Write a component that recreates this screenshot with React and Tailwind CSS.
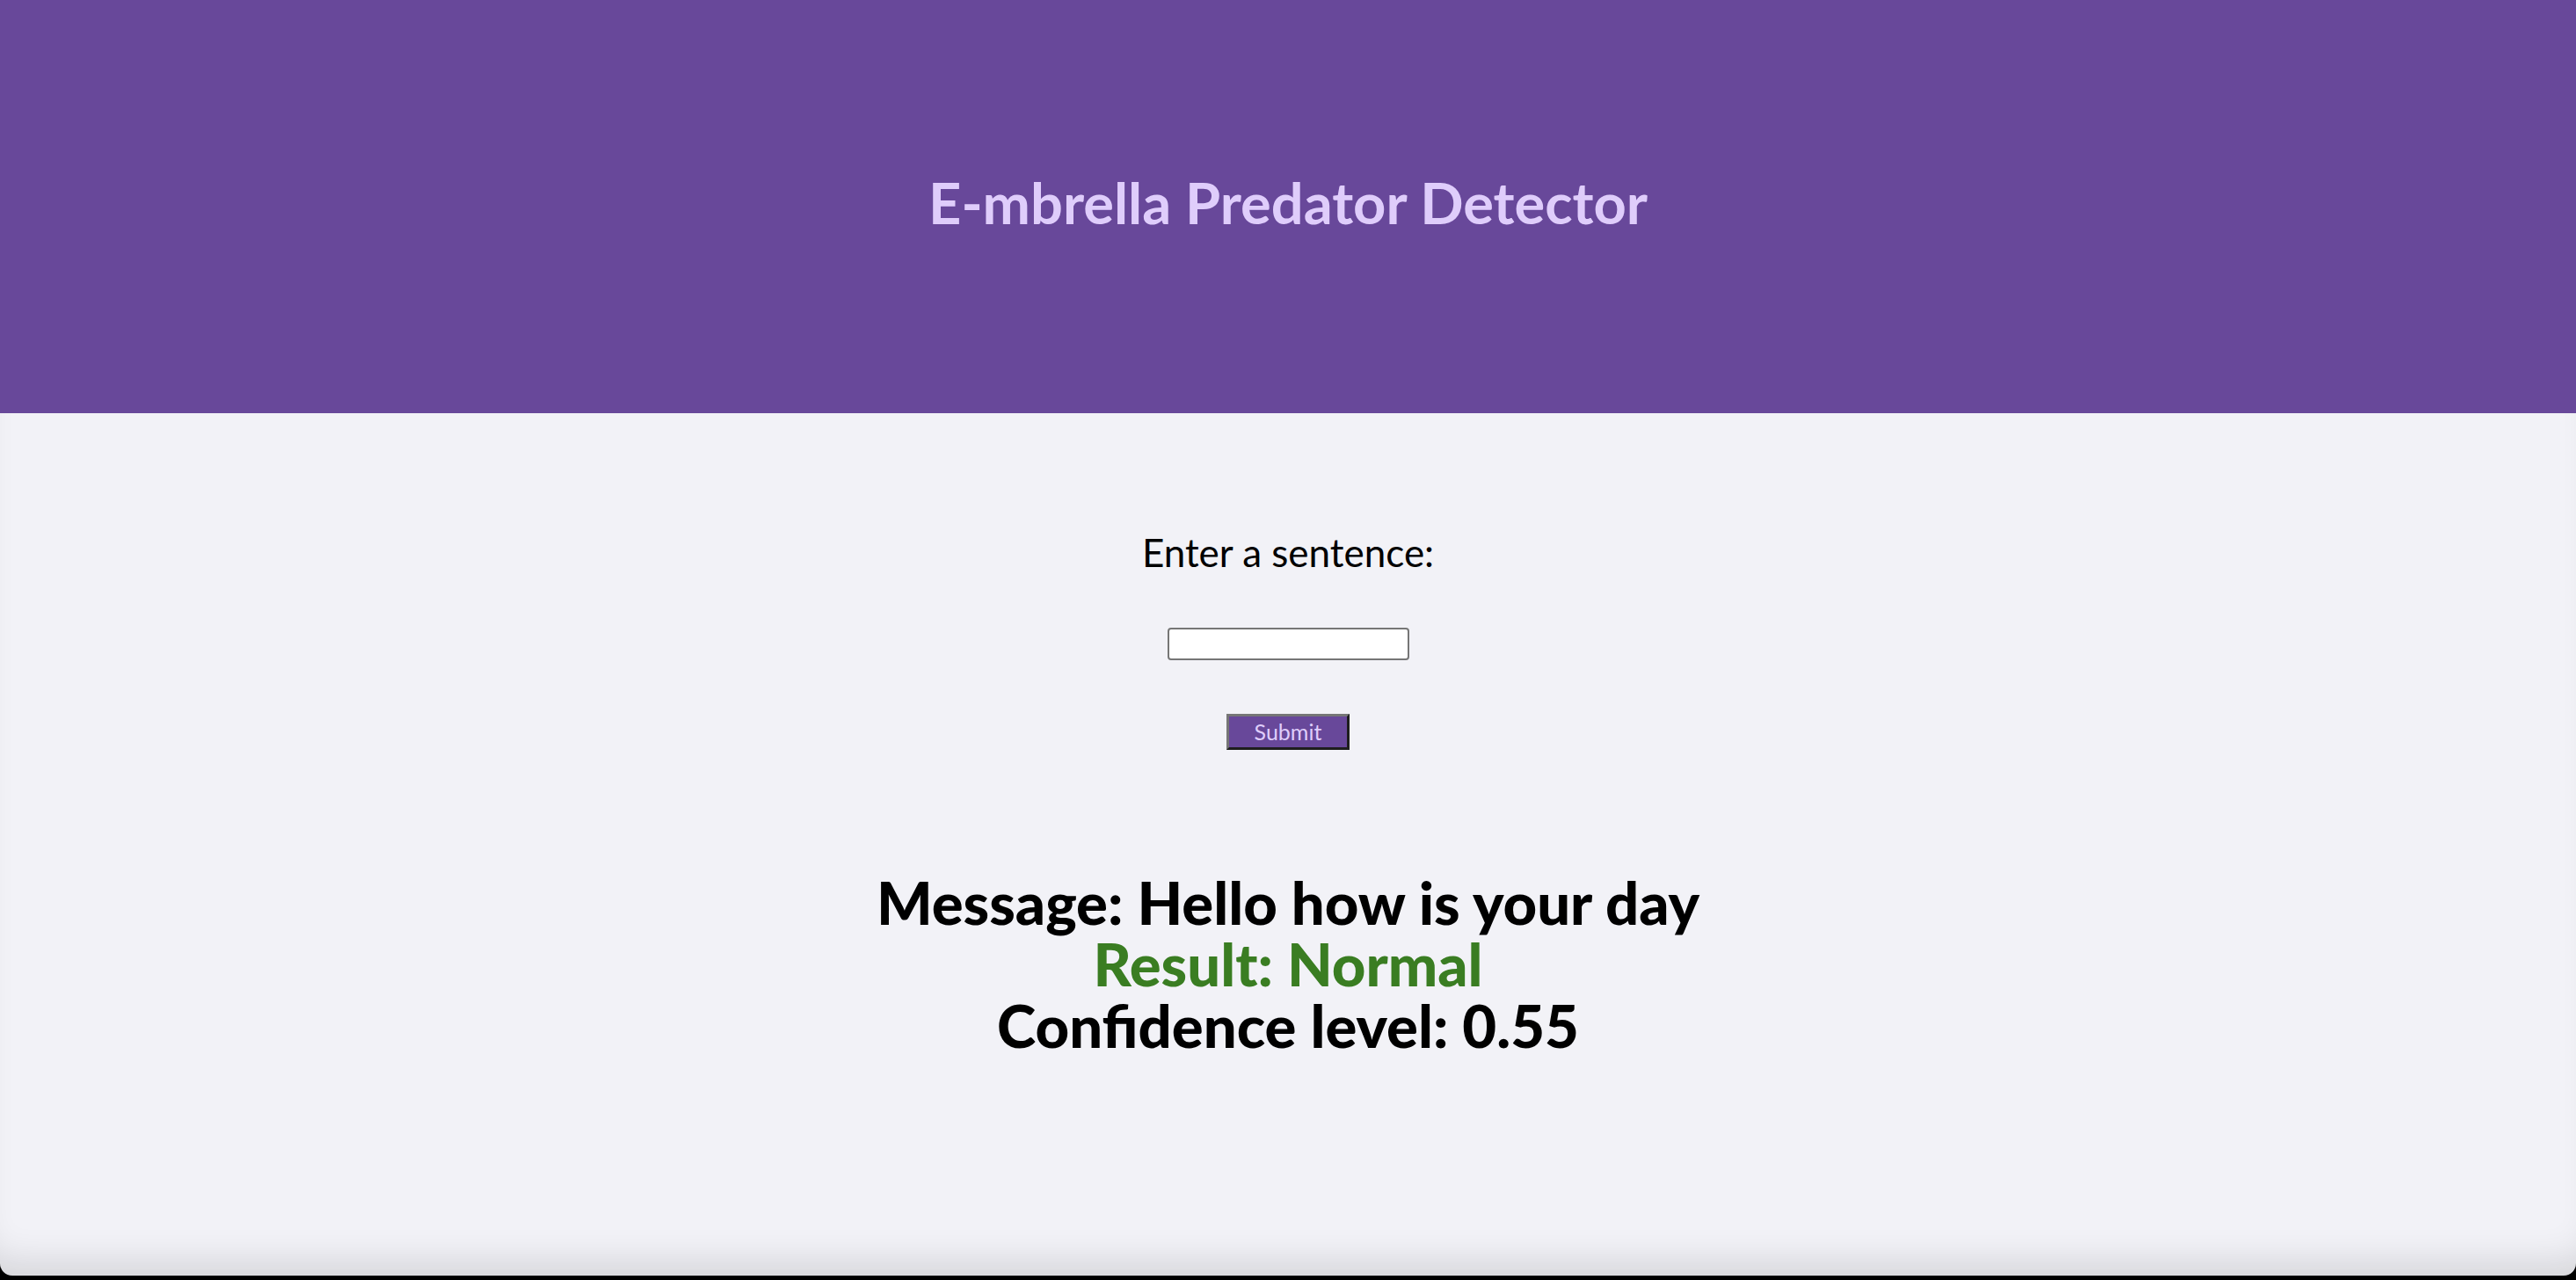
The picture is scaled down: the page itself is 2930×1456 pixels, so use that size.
export default function App() {
  const font = { fontFamily: '"Lato", "Open Sans", sans-serif' };

  return (
    <div className="h-screen bg-black overflow-hidden" style={font}>
      <div className="h-[1451px] flex flex-col bg-[#f2f2f7] rounded-b-[14px] overflow-hidden shadow-[inset_0_-40px_40px_-24px_rgba(0,0,0,0.12)]">
        <header className="h-[470px] shrink-0 bg-[#68489a] flex items-center justify-center pb-[8px]">
          <h1 className="text-[65px] font-bold text-[#dfcdfb]">
            E-mbrella Predator Detector
          </h1>
        </header>

        <main className="flex flex-col items-center">
          <form className="flex flex-col items-center" onSubmit={(e) => e.preventDefault()}>
            <label htmlFor="sentence" className="mt-[130px] text-[44px] leading-[56px] text-black">
              Enter a sentence:
            </label>
            <input
              id="sentence"
              type="text"
              className="mt-[58px] w-[275px] h-[37px] bg-white border-2 border-[#767676] rounded-[4px]"
            />
            <button
              type="submit"
              className="mt-[61px] w-[140px] h-[41px] bg-[#68489a] text-[#dfcdfb] text-[25px] leading-none border-[3px] border-t-[#767676] border-l-[#767676] border-b-[#1e1e1e] border-r-[#1e1e1e]"
            >
              Submit
            </button>
          </form>

          <div className="mt-[138px] flex flex-col items-center font-black text-[67px] leading-[70px]">
            <p className="text-black">Message: Hello how is your day</p>
            <p className="text-[#3a7d22]">Result: Normal</p>
            <p className="text-black">Confidence level: 0.55</p>
          </div>
        </main>
      </div>
    </div>
  );
}
